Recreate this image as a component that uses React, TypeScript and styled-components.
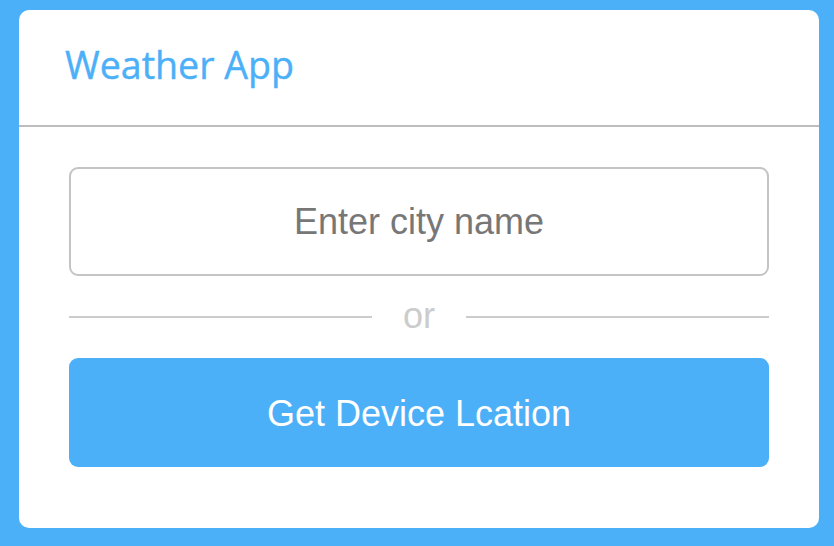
import React from "react";
import styled, { createGlobalStyle } from "styled-components";

const Global = createGlobalStyle`
  html, body { margin: 0; padding: 0; background: #4bb0f8; }
  body { width: 834px; height: 546px; overflow: hidden; }
`;

const Page = styled.div`
  box-sizing: border-box;
  width: 834px;
  height: 546px;
  padding: 10px 15px 18px 19px;
  background: #4bb0f8;
`;

const Card = styled.div`
  box-sizing: border-box;
  width: 800px;
  height: 518px;
  background: #fff;
  border-radius: 10px;
  display: flex;
  flex-direction: column;
`;

const Header = styled.div`
  box-sizing: border-box;
  height: 117px;
  border-bottom: 2px solid #bdbdbd;
  display: flex;
  align-items: center;
  padding: 0 0 6px 46px;
`;

const Title = styled.h1`
  margin: 0;
  font-family: "Open Sans", sans-serif;
  font-weight: 400;
  font-size: 37.6px;
  color: #4bb0f8;
  -webkit-text-stroke: 0.4px #4bb0f8;
`;

const Body = styled.div`
  display: flex;
  flex-direction: column;
  padding: 40px 50px 0;
`;

const Input = styled.input`
  box-sizing: border-box;
  width: 700px;
  height: 109px;
  border: 2px solid #c4c4c4;
  border-radius: 9px;
  text-align: center;
  font-family: "Liberation Sans", Arial, sans-serif;
  font-size: 36px;
  outline: none;
  &::placeholder { color: #777777; }
`;

const Divider = styled.div`
  display: flex;
  align-items: center;
  height: 82px;
  gap: 31px;
`;

const Line = styled.div`
  flex: 1;
  height: 2px;
  background: #cccccc;
`;

const Or = styled.span`
  font-family: "Liberation Sans", Arial, sans-serif;
  font-size: 36px;
  color: #cccccc;
  padding: 0 0 2px;
`;

const Button = styled.button`
  box-sizing: border-box;
  width: 700px;
  height: 109px;
  border: none;
  border-radius: 9px;
  background: #4bb0f8;
  color: #fff;
  font-family: "Liberation Sans", Arial, sans-serif;
  font-size: 36px;
  padding: 2px 0 0;
  cursor: pointer;
`;

export default function App() {
  return (
    <>
      <Global />
      <Page>
        <Card>
          <Header>
            <Title>Weather App</Title>
          </Header>
          <Body>
            <Input placeholder="Enter city name" />
            <Divider>
              <Line />
              <Or>or</Or>
              <Line />
            </Divider>
            <Button>Get Device Lcation</Button>
          </Body>
        </Card>
      </Page>
    </>
  );
}
